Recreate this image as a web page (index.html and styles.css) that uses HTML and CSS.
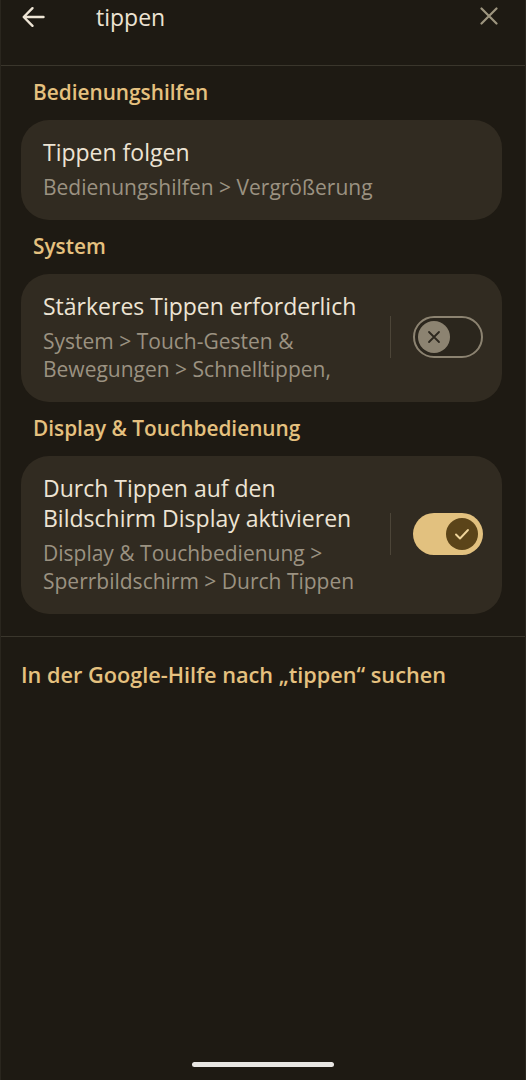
FILE: index.html
```html
<!DOCTYPE html>
<html lang="de">
<head>
<meta charset="utf-8">
<title>Suche</title>
<link rel="stylesheet" href="styles.css">
</head>
<body>
<div class="screen">
  <header class="topbar">
    <div class="search-row">
      <svg class="back" viewBox="0 0 24 22" width="24" height="22" aria-hidden="true">
        <path d="M22.5 11H3M11.5 2.2L2.7 11l8.8 8.8" fill="none" stroke="#eee5d5" stroke-width="2.4" stroke-linecap="round" stroke-linejoin="round"/>
      </svg>
      <span class="query">tippen</span>
      <svg class="clear" viewBox="0 0 18 18" width="18" height="18" aria-hidden="true">
        <path d="M1.5 1.5L16.5 16.5M16.5 1.5L1.5 16.5" fill="none" stroke="#9d957f" stroke-width="2.2" stroke-linecap="round"/>
      </svg>
    </div>
  </header>

  <main class="results">
    <h2 class="section">Bedienungshilfen</h2>
    <div class="card">
      <div class="text">
        <div class="title">Tippen folgen</div>
        <div class="sub">Bedienungshilfen &gt; Vergrößerung</div>
      </div>
    </div>

    <h2 class="section">System</h2>
    <div class="card">
      <div class="text">
        <div class="title">Stärkeres Tippen erforderlich</div>
        <div class="sub">System &gt; Touch-Gesten &amp; Bewegungen &gt; Schnelltippen,</div>
      </div>
      <div class="vdiv"></div>
      <div class="toggle off">
        <span class="thumb">
          <svg viewBox="0 0 14 14" width="14" height="14" aria-hidden="true"><path d="M2 2L12 12M12 2L2 12" fill="none" stroke="#2c271e" stroke-width="1.8" stroke-linecap="round"/></svg>
        </span>
      </div>
    </div>

    <h2 class="section">Display &amp; Touchbedienung</h2>
    <div class="card">
      <div class="text">
        <div class="title">Durch Tippen auf den Bildschirm Display aktivieren</div>
        <div class="sub">Display &amp; Touchbedienung &gt; Sperrbildschirm &gt; Durch Tippen</div>
      </div>
      <div class="vdiv"></div>
      <div class="toggle on">
        <span class="thumb">
          <svg viewBox="0 0 16 14" width="16" height="14" aria-hidden="true"><path d="M2 7.5L6 11.5L14 3" fill="none" stroke="#efd49a" stroke-width="1.9" stroke-linecap="round" stroke-linejoin="round"/></svg>
        </span>
      </div>
    </div>
  </main>

  <div class="help">
    <a class="help-link">In der Google-Hilfe nach „tippen“ suchen</a>
  </div>

  <div class="home-indicator"></div>
</div>
</body>
</html>
```

FILE: styles.css
```css
* { box-sizing: border-box; }

html, body {
  margin: 0;
  padding: 0;
  background: #1e1a13;
}

body {
  font-family: "Open Sans", Roboto, sans-serif;
  color: #ece3d3;
}

.screen {
  width: 526px;
  min-height: 1080px;
  display: flex;
  flex-direction: column;
  border-left: 1px solid #2a261e;
  border-right: 1px solid #2a261e;
}

.topbar {
  height: 66px;
  border-bottom: 1px solid #3a362c;
}

.search-row {
  height: 34px;
  display: flex;
  align-items: center;
  padding: 0 0 0 20px;
}

.back { flex: none; }

.query {
  margin-left: 51px;
  font-size: 23px;
  line-height: 34px;
  color: #ece3d3;
  flex: 1;
}

.clear {
  flex: none;
  margin-right: 27px;
  margin-top: -2px;
}

.results {
  padding: 0 23px 0 20px;
}

.section {
  margin: 0;
  padding: 14px 0 16px 12px;
  font-size: 20.8px;
  line-height: 24px;
  font-weight: 600;
  color: #e5c17f;
}

.card {
  background: #312b21;
  border-radius: 28px;
  display: flex;
  align-items: center;
  padding: 17px 19px 19px 22px;
}

.text {
  flex: 1;
  min-width: 0;
}

.title {
  font-size: 23px;
  line-height: 30px;
  color: #ede4d4;
}

.sub {
  margin-top: 6px;
  font-size: 21px;
  line-height: 28px;
  color: #9b9281;
}

.vdiv {
  flex: none;
  width: 1px;
  height: 42px;
  background: #4c4538;
  margin: 0 22px 0 17px;
}

.toggle {
  flex: none;
  width: 70px;
  height: 42px;
  border-radius: 21px;
  display: flex;
  align-items: center;
}

.toggle.off {
  border: 2.5px solid #8c8371;
  background: #2b261d;
  justify-content: flex-start;
  padding-left: 3px;
}

.toggle.on {
  background: #e2c17f;
  justify-content: flex-end;
  padding-right: 5px;
}

.thumb {
  width: 32px;
  height: 32px;
  border-radius: 50%;
  display: flex;
  align-items: center;
  justify-content: center;
}

.off .thumb { background: #8c8371; }
.on .thumb { background: #5b4419; }

.help {
  margin-top: 22px;
  border-top: 1px solid #3a362c;
  padding: 26px 0 0 20px;
}

.help-link {
  font-size: 21.7px;
  line-height: 24px;
  font-weight: 600;
  color: #e5c17f;
}

.home-indicator {
  margin: auto auto 13px;
  width: 142px;
  height: 5px;
  border-radius: 3px;
  background: #e8e6e3;
}
```
